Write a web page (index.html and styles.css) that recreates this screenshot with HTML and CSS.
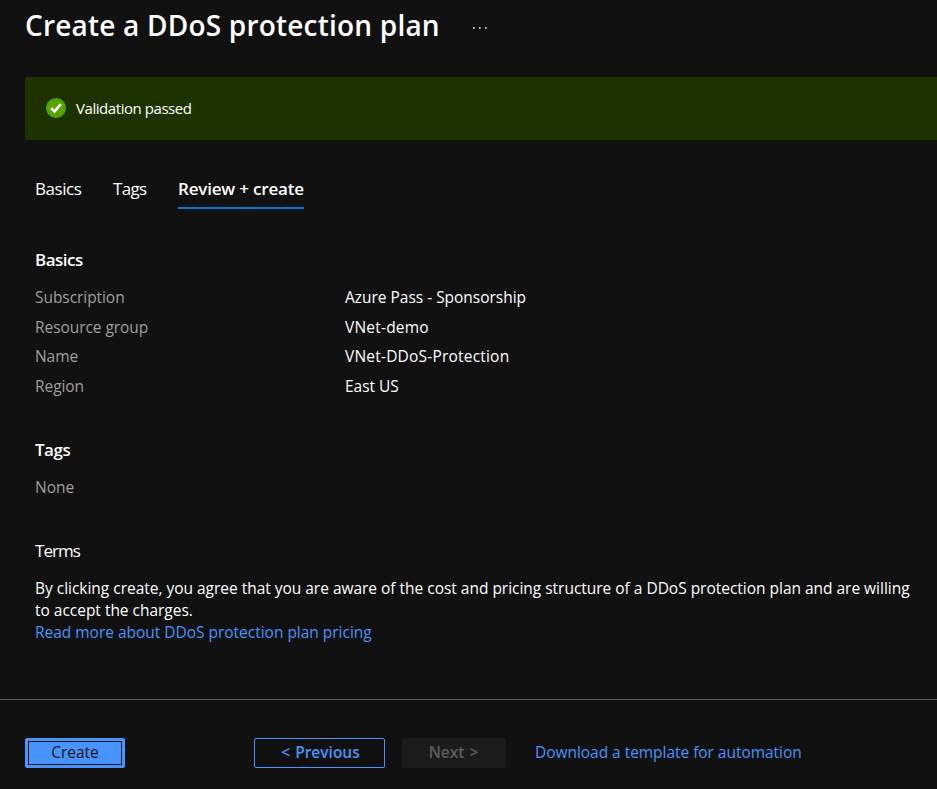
FILE: index.html
```html
<!DOCTYPE html>
<html lang="en">
<head>
<meta charset="utf-8">
<title>Create a DDoS protection plan</title>
<link rel="stylesheet" href="styles.css">
</head>
<body>
<main class="page">
  <header class="header">
    <h1 class="title">Create a DDoS protection plan</h1>
    <svg class="more" viewBox="0 0 14 3" role="img" aria-label="More"><path d="M0 0h1.7v1.7H0zM6 0h1.7v1.7H6zM12 0h1.7v1.7h-1.7z"/></svg>
  </header>
  <div class="banner">
    <svg class="check" viewBox="0 0 20 20"><circle cx="10" cy="10" r="10"/><path d="M5.2 10.2l3.3 3.3 6.2-7.3"/></svg>
    <span class="banner-text">Validation passed</span>
  </div>
  <nav class="tabs">
    <a class="tab tab-basics">Basics</a>
    <a class="tab tab-tags">Tags</a>
    <a class="tab tab-active">Review + create</a>
  </nav>
  <section class="section basics">
    <h2 class="heading">Basics</h2>
    <dl class="details">
      <dt>Subscription</dt><dd>Azure Pass - Sponsorship</dd>
      <dt>Resource group</dt><dd class="wide">VNet-demo</dd>
      <dt>Name</dt><dd class="wide">VNet-DDoS-Protection</dd>
      <dt>Region</dt><dd>East US</dd>
    </dl>
  </section>
  <section class="section tags">
    <h2 class="heading">Tags</h2>
    <p class="none">None</p>
  </section>
  <section class="section terms">
    <h2 class="heading heading-terms">Terms</h2>
    <p class="copy">By clicking create, you agree that you are aware of the cost and pricing structure of a DDoS protection plan and are willing<br>to accept the charges.</p>
    <a class="link pricing">Read more about DDoS protection plan pricing</a>
  </section>
  <footer class="footer">
    <button class="btn primary"><span>Create</span></button>
    <button class="btn previous">&lt; Previous</button>
    <button class="btn next" disabled>Next &gt;</button>
    <a class="link download">Download a template for automation</a>
  </footer>
</main>
</body>
</html>
```

FILE: styles.css
```css
* { box-sizing: border-box; }
body {
  margin: 0;
  background: #111111;
  color: #ffffff;
  font-family: "Open Sans", "Noto Sans", sans-serif;
  font-size: 15.5px;
  line-height: 22px;
  letter-spacing: -0.02px;
}
h1, h2, p, dl, dd { margin: 0; }
.page { height: 789px; overflow: hidden; white-space: nowrap; display: flex; flex-direction: column; }
.header { display: flex; height: 77px; padding-left: 25px; }
.title { width: 448px; font-size: 28px; font-weight: 600; line-height: 40px; margin-top: 5px; letter-spacing: 0.2px; }
.more { width: 14px; height: 3px; margin-top: 27px; fill: #d0d0d0; }
.banner { height: 63px; margin-left: 25px; padding: 0 0 2px 21px; background: #1c3300; border-radius: 2px 0 0 2px; display: flex; align-items: center; gap: 10px; }
.check { width: 20px; height: 20px; fill: #57a300; }
.check path { fill: none; stroke: #fff; stroke-width: 2.6; }
.banner-text { font-size: 15px; letter-spacing: -0.44px; }
.tabs { display: flex; margin: 36px 0 0 35px; }
.tab { height: 33px; font-size: 17px; line-height: 26px; letter-spacing: -0.45px; }
.tab-basics { width: 78px; }
.tab-tags { width: 65px; letter-spacing: -0.65px; }
.tab-active { width: 126px; font-weight: 600; letter-spacing: -0.18px; border-bottom: 2px solid #0078d4; }
.section { margin-left: 35px; }
.basics { margin-top: 39px; }
.heading { font-size: 17px; font-weight: 600; line-height: 24px; letter-spacing: -0.5px; }
.details { display: grid; grid-template-columns: 310px 1fr; grid-auto-rows: 29.7px; margin-top: 14px; }
dt, .none { color: #a19f9d; }
dt { letter-spacing: -0.06px; }
.wide { letter-spacing: 0.2px; }
.tags { margin-top: 33px; }
.none { margin-top: 14px; }
.terms { margin-top: 41px; }
.heading-terms { font-weight: 400; letter-spacing: -0.95px; }
.copy { margin-top: 14px; }
.link { color: #4894fe; }
.footer { display: flex; align-items: center; height: 90px; margin-top: auto; border-top: 1px solid #605e5c; padding: 16px 0 0 25px; }
.btn { height: 30px; padding: 0 0 1px; font: inherit; line-height: 20px; border: 1px solid #4894fe; border-radius: 2px; background: none; color: #4894fe; flex: none; }
.primary { width: 100px; margin-right: 129px; padding: 2px; background: #4894fe; color: #111; }
.primary span { display: block; height: 24px; line-height: 21px; border: 1px solid #111; }
.previous { width: 131px; margin-right: 17px; padding-left: 2px; font-weight: 600; word-spacing: 1px; }
.next { width: 104px; margin-right: 29px; padding-right: 1px; background: #1b1b1b; border-color: #1b1b1b; color: #605e5c; font-weight: 600; word-spacing: 1px; }
.download { margin-top: -2px; letter-spacing: -0.04px; }
```
